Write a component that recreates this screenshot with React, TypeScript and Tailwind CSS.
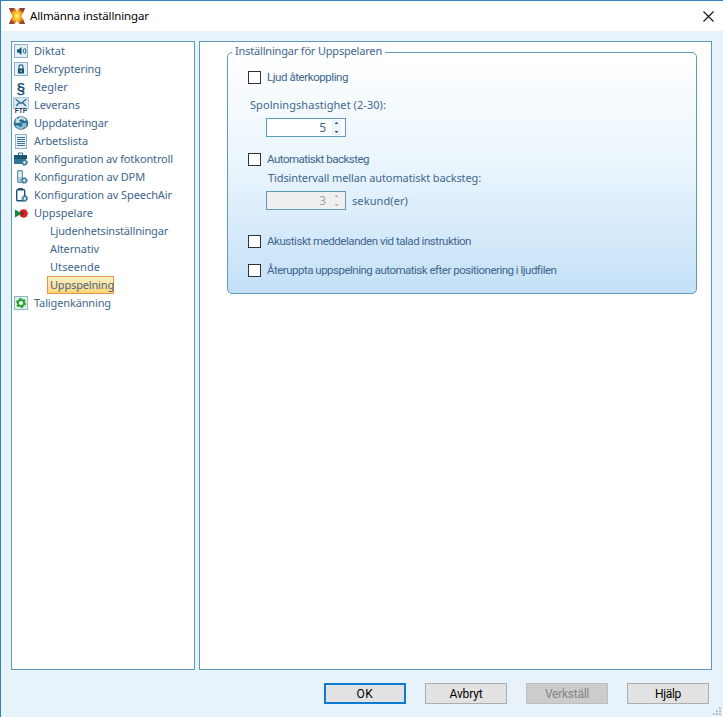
import { useLayoutEffect, useRef, useState } from 'react'
import type { ReactNode } from 'react'

// Text that spreads or tightens its letters to fill a given width
function FitText({ text, width, className = '' }: { text: string; width: number; className?: string }) {
  const ref = useRef<HTMLSpanElement>(null)
  const [spacing, setSpacing] = useState(0)

  useLayoutEffect(() => {
    if (ref.current) {
      const natural = ref.current.getBoundingClientRect().width
      setSpacing((width - natural) / text.length)
    }
  }, [text, width])

  return (
    <span ref={ref} className={`inline-block whitespace-pre ${className}`} style={{ letterSpacing: `${spacing}px` }}>
      {text}
    </span>
  )
}

function LogoIcon() {
  return (
    <svg width="16" height="16" viewBox="0 0 16 16">
      <path d="M0 0h5l3 3 3-3h5l-3.500 8L16 16h-5l-3-3-3 3H0l3.500-8z" fill="#f2a01f" />
      <path d="M0 0h5l1 1-3 3H1.500zM16 0h-5l-1 1 3 3h1.500z" fill="#8f3f33" />
      <path d="M0 16h5l1-1-3-3H1.500zM16 16h-5l-1-1 3-3h1.500z" fill="#9c4530" />
      <path d="M1.500 4L6 1l1 1-4.500 4zM14.500 4L10 1 9 2l4.500 4zM1.500 12L6 15l1-1-4.500-4zM14.500 12L10 15l-1-1 4.500-4z" fill="#dc7a26" />
      <path d="M4 4.500L8 3l4 1.500L11 8l1 3.500L8 13l-4-1.500L5 8z" fill="#fbc62c" />
      <path d="M8 5l2 3-2 3-2-3z" fill="#ffe98a" />
    </svg>
  )
}

function SpeakerIcon() {
  return (
    <svg width="14" height="14" viewBox="0 0 14 14">
      <rect x=".5" y=".5" width="13" height="13" fill="#e2eff7" stroke="#8fb1c7" />
      <path d="M3 5.500h1.500L7.500 3v8L4.500 8.500H3z" fill="#1d5475" />
      <path d="M9 5q1.200 2 0 4M10.800 4q2 3 0 6" fill="none" stroke="#3d7ea1" strokeWidth="1.200" />
    </svg>
  )
}

function LockIcon() {
  return (
    <svg width="14" height="14" viewBox="0 0 14 14">
      <rect x=".5" y=".5" width="13" height="13" fill="#e2eff7" stroke="#8fb1c7" />
      <path d="M5 7V4.500q0-1.700 2-1.700t2 1.700V7" fill="none" stroke="#2a6688" strokeWidth="1.200" />
      <rect x="4" y="6.500" width="6" height="5" fill="#1d5475" />
      <rect x="6.500" y="8" width="1" height="2" fill="#cfe3ef" />
    </svg>
  )
}

function FtpIcon() {
  return (
    <svg width="16" height="16" viewBox="0 0 16 16">
      <rect x=".5" y=".5" width="15" height="11" fill="#d9e9f3" stroke="#a9c6d8" />
      <path d="M2.500 2l5.500 4.500L13.500 2M3 9l3.500-3.500M13 9L9.500 5.500" fill="none" stroke="#2a6688" strokeWidth="1.200" />
      <text x="8" y="15.800" textAnchor="middle" fontSize="6.500" fontWeight="700" fontFamily="Liberation Sans, sans-serif" fill="#16405a">FTP</text>
    </svg>
  )
}

function GlobeIcon() {
  return (
    <svg width="16" height="14" viewBox="0 0 16 14">
      <ellipse cx="8" cy="7" rx="7.300" ry="6.700" fill="#2d6f92" />
      <path d="M6.500 1.200q5-1 7 3L11.500 5Q9 2 6 4.500L8 6.500 2.500 7l.5-5 1.500 1z" fill="#c6e2e6" />
      <path d="M9.500 12.800q-5 .8-7-2.800L4.500 9q2.500 3 5.500.5L8 7.500l5.500-.5-.5 5-1.500-1z" fill="#8fc0d2" />
    </svg>
  )
}

function ListIcon() {
  return (
    <svg width="12" height="15" viewBox="0 0 12 15">
      <rect x=".5" y=".5" width="11" height="14" fill="#eaf4fa" stroke="#8fb1c7" />
      <path d="M2 3.500h8M2 5.500h8M2 7.500h8M2 9.500h8M2 11.500h8" stroke="#3a7699" />
    </svg>
  )
}

function Cog({ x, y }: { x: number; y: number }) {
  return (
    <g transform={`translate(${x} ${y})`}>
      <circle r="2" fill="#fff" stroke="#3d7ea1" strokeWidth="1.500" />
      <circle r="3" fill="none" stroke="#3d7ea1" strokeDasharray="1.200 1.150" />
    </g>
  )
}

function PedalIcon() {
  return (
    <svg width="14" height="14" viewBox="0 0 14 14">
      <path d="M4.500 3V1h4v2" fill="none" stroke="#2d6f92" />
      <path d="M0 3h13v4H0z" fill="#1d5475" />
      <path d="M0 7h12v5H0z" fill="#357294" />
      <Cog x={10.500} y={10.500} />
    </svg>
  )
}

function RecorderIcon() {
  return (
    <svg width="14" height="14" viewBox="0 0 14 14">
      <rect x="3.500" y=".5" width="5" height="12" rx=".5" fill="#a9c8da" stroke="#6893ad" />
      <rect x="4.500" y="2" width="3" height="5" fill="#e6f1f7" />
      <Cog x={10.300} y={10.500} />
    </svg>
  )
}

function PhoneIcon() {
  return (
    <svg width="14" height="14" viewBox="0 0 14 14">
      <rect x="2.700" y="1.700" width="8" height="11" rx="1" fill="#fff" stroke="#1d5475" strokeWidth="1.400" />
      <path d="M4 .7h5" stroke="#1d5475" strokeWidth="1.400" />
      <Cog x={10.800} y={10.500} />
    </svg>
  )
}

function PlayerIcon() {
  return (
    <svg width="13" height="9" viewBox="0 0 13 9">
      <circle cx="8.600" cy="4.500" r="4.200" fill="#d9202a" />
      <path d="M0 .5l7 4-7 4z" fill="#168a3a" />
      <path d="M5.500 2l3.500 2.500L5.500 7 7 4.500z" fill="#5f1b1b" />
    </svg>
  )
}

function GearIcon() {
  return (
    <svg width="14" height="14" viewBox="0 0 14 14">
      <rect x=".5" y=".5" width="13" height="13" fill="#dfeff0" stroke="#8fb9b5" />
      <circle cx="7" cy="7" r="3" fill="#fff" stroke="#27a52c" strokeWidth="2" />
      <circle cx="7" cy="7" r="4.400" fill="none" stroke="#27a52c" strokeWidth="1.300" strokeDasharray="2.300 2.300" />
    </svg>
  )
}

const section = (
  <span className="font-['Liberation_Sans',sans-serif] text-[15px] leading-none font-bold text-[#1d5475]">§</span>
)

const tree: { label: string; width: number; icon?: ReactNode; selected?: boolean }[] = [
  { label: 'Diktat', width: 31, icon: <SpeakerIcon /> },
  { label: 'Dekryptering', width: 67, icon: <LockIcon /> },
  { label: 'Regler', width: 34, icon: section },
  { label: 'Leverans', width: 46, icon: <FtpIcon /> },
  { label: 'Uppdateringar', width: 74, icon: <GlobeIcon /> },
  { label: 'Arbetslista', width: 54, icon: <ListIcon /> },
  { label: 'Konfiguration av fotkontroll', width: 139, icon: <PedalIcon /> },
  { label: 'Konfiguration av DPM', width: 111, icon: <RecorderIcon /> },
  { label: 'Konfiguration av SpeechAir', width: 138, icon: <PhoneIcon /> },
  { label: 'Uppspelare', width: 59, icon: <PlayerIcon /> },
  { label: 'Ljudenhetsinställningar', width: 118 },
  { label: 'Alternativ', width: 49 },
  { label: 'Utseende', width: 50 },
  { label: 'Uppspelning', width: 64, selected: true },
  { label: 'Taligenkänning', width: 77, icon: <GearIcon /> },
]

function TreeRow({ item }: { item: (typeof tree)[number] }) {
  if (!item.icon) {
    return (
      <div className="flex h-[18px] items-center pl-[35px]">
        <div
          className={`flex h-[18px] items-center border pl-[2px] ${
            item.selected ? 'w-[67px] border-[#e8954a] bg-linear-to-b from-[#fff0c4] to-[#ffd576]' : 'border-transparent'
          }`}
        >
          <FitText text={item.label} width={item.width} />
        </div>
      </div>
    )
  }
  return (
    <div className="flex h-[18px] items-center">
      <div className="flex w-[18px] shrink-0 justify-center">{item.icon}</div>
      <FitText text={item.label} width={item.width} className="ml-1" />
    </div>
  )
}

function CheckRow({ label, width }: { label: string; width: number }) {
  return (
    <label className="flex h-[14px] items-center pl-5">
      <span className="size-[13px] border border-[#2e3338] bg-white" />
      <FitText text={label} width={width} className="ml-1.5 font-['Roboto',sans-serif] text-[11.5px]" />
    </label>
  )
}

function Spinner({ value, disabled }: { value: number; disabled?: boolean }) {
  return (
    <div
      className={`flex h-[19px] w-20 items-center justify-end border border-[#5f9abb] pr-1 ${
        disabled ? 'bg-[#efefef] text-[#a3a3a3]' : 'bg-white'
      }`}
    >
      <span className="mr-1.5 text-[12px]">{value}</span>
      <svg width="9" height="15" viewBox="0 0 9 15" className={disabled ? 'text-[#a8a8a8]' : 'text-[#274d6b]'}>
        <rect width="9" height="15" fill={disabled ? '#efefef' : '#e9f5fd'} />
        <path d="M2.500 4h4l-2-2zM2.500 11h4l-2 2z" fill="currentColor" />
      </svg>
    </div>
  )
}

const buttons = [
  { label: 'OK', width: 17, style: 'border-2 border-[#0c7bd0] bg-[#e2e2e2] text-black' },
  { label: 'Avbryt', width: 33, style: 'border border-[#adadad] bg-[#e2e2e2] text-black' },
  { label: 'Verkställ', width: 44, style: 'border border-[#bfbfbf] bg-[#cccccc] text-[#858585]' },
  { label: 'Hjälp', width: 26, style: 'border border-[#adadad] bg-[#e2e2e2] text-black' },
]

export default function App() {
  return (
    <div className="flex h-[717px] w-[723px] flex-col overflow-hidden border-t border-l border-[#2e82bf] bg-[#e7f2fb] font-['Noto_Sans',sans-serif] text-[11px] leading-[14px] text-[#41668c]">
      {/* Title bar */}
      <div className="flex h-[30px] shrink-0 items-center bg-white pr-[9px] pl-2">
        <LogoIcon />
        <FitText text="Allmänna inställningar" width={119} className="ml-[5px] text-[11.5px] text-black" />
        <svg width="11" height="11" viewBox="0 0 11 11" className="ml-auto">
          <path d="M.5.5l10 10M10.500.5l-10 10" stroke="#111" strokeWidth="1.100" />
        </svg>
      </div>

      {/* Tree and settings */}
      <div className="mt-[10px] flex h-[629px] shrink-0 gap-1 pl-[10px]">
        <div className="w-[184px] border border-[#5f9abb] bg-white">
          {tree.map(item => (
            <TreeRow key={item.label} item={item} />
          ))}
        </div>

        <div className="w-[513px] border border-[#5f9abb] bg-white pt-[10px] pl-[27px]">
          <section className="relative h-[242px] w-[470px] rounded-[5px] border border-[#5f9abb] bg-linear-to-b from-white via-[#e8f4fc] to-[#c3e0f7] pt-[17px]">
            <h2 className="absolute -top-[9px] left-1 bg-linear-to-b from-white to-[#fdfeff] px-[3px]">
              <FitText text="Inställningar för Uppspelaren" width={147} />
            </h2>
            <CheckRow label="Ljud återkoppling" width={81} />
            <div className="mt-[14px] pl-[22px]">
              <FitText text="Spolningshastighet (2-30):" width={136} />
            </div>
            <div className="mt-[6px] pl-[38px]">
              <Spinner value={5} />
            </div>
            <div className="mt-[15px]">
              <CheckRow label="Automatiskt backsteg" width={102} />
            </div>
            <div className="mt-[5px] pl-10">
              <FitText text="Tidsintervall mellan automatiskt backsteg:" width={213} />
            </div>
            <div className="mt-[6px] flex items-center gap-[6px] pl-[38px]">
              <Spinner value={3} disabled />
              <FitText text="sekund(er)" width={56} />
            </div>
            <div className="mt-[24px]">
              <CheckRow label="Akustiskt meddelanden vid talad instruktion" width={204} />
            </div>
            <div className="mt-[15px]">
              <CheckRow label="Återuppta uppspelning automatisk efter positionering i ljudfilen" width={289} />
            </div>
          </section>
        </div>
      </div>

      {/* Dialog buttons */}
      <div className="mt-[13px] flex gap-[19px] pl-[323px]">
        {buttons.map(b => (
          <button key={b.label} className={`flex h-[21px] w-[82px] items-center justify-center ${b.style}`}>
            <FitText text={b.label} width={b.width} className="font-['Roboto',sans-serif] text-[12px]" />
          </button>
        ))}
      </div>

      <svg width="9" height="9" viewBox="0 0 9 9" className="mt-auto mr-px mb-px ml-auto" fill="#b3bfca">
        <path d="M6 0h2v2H6zM6 3h2v2H6zM6 6h2v2H6zM3 3h2v2H3zM3 6h2v2H3zM0 6h2v2H0z" />
      </svg>
    </div>
  )
}
